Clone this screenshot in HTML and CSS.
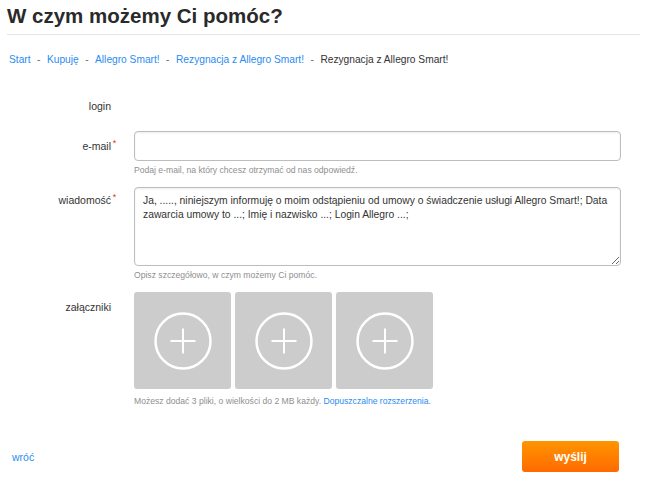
FILE: index.html
```html
<!DOCTYPE html>
<html lang="pl">
<head>
<meta charset="utf-8">
<title>W czym możemy Ci pomóc?</title>
<link rel="stylesheet" href="styles.css">
</head>
<body>
<div class="page">
  <h1 class="title">W czym możemy Ci pomóc?</h1>
  <nav class="crumbs"><a href="#">Start</a><span class="sep">-</span><a href="#">Kupuję</a><span class="sep">-</span><a href="#">Allegro Smart!</a><span class="sep">-</span><a href="#">Rezygnacja z Allegro Smart!</a><span class="sep">-</span><span class="current">Rezygnacja z Allegro Smart!</span></nav>

  <form class="form">
    <div class="label label-login">login<span class="req"></span></div>
    <div class="field"></div>

    <div class="label label-email">e-mail<span class="req">*</span></div>
    <div class="field">
      <input class="input" type="text">
      <div class="help">Podaj e-mail, na który chcesz otrzymać od nas odpowiedź.</div>
    </div>

    <div class="label label-msg">wiadomość<span class="req">*</span></div>
    <div class="field">
      <textarea class="textarea">Ja, ....., niniejszym informuję o moim odstąpieniu od umowy o świadczenie usługi Allegro Smart!; Data zawarcia umowy to ...; Imię i nazwisko ...; Login Allegro ...;</textarea>
      <div class="help">Opisz szczegółowo, w czym możemy Ci pomóc.</div>
    </div>

    <div class="label label-att">załączniki<span class="req"></span></div>
    <div class="field">
      <div class="uploads">
        <div class="upload"><svg width="58" height="58" viewBox="0 0 58 58"><circle cx="29" cy="29" r="27.5" fill="none" stroke="#fff" stroke-width="2.5"/><path d="M16.5 29h25M29 16.5v25" stroke="#fff" stroke-width="2"/></svg></div>
        <div class="upload"><svg width="58" height="58" viewBox="0 0 58 58"><circle cx="29" cy="29" r="27.5" fill="none" stroke="#fff" stroke-width="2.5"/><path d="M16.5 29h25M29 16.5v25" stroke="#fff" stroke-width="2"/></svg></div>
        <div class="upload"><svg width="58" height="58" viewBox="0 0 58 58"><circle cx="29" cy="29" r="27.5" fill="none" stroke="#fff" stroke-width="2.5"/><path d="M16.5 29h25M29 16.5v25" stroke="#fff" stroke-width="2"/></svg></div>
      </div>
      <div class="help help-att">Możesz dodać 3 pliki, o wielkości do 2 MB każdy. <a href="#">Dopuszczalne rozszerzenia</a>.</div>
    </div>
  </form>

  <div class="footer">
    <a class="back" href="#">wróć</a>
    <button class="submit" type="button">wyślij</button>
  </div>
</div>
</body>
</html>
```

FILE: styles.css
```css
* { box-sizing: border-box; }
html, body { margin: 0; padding: 0; background: #fff; }
body {
  font-family: "Liberation Sans", Arial, sans-serif;
  color: #333;
  font-size: 10.5px;
}
a { color: #2a8cf0; text-decoration: none; }

.page { width: 645px; }

.title {
  margin: 0 5px 0 7px;
  padding: 6px 0 8px;
  font-size: 20.5px;
  line-height: 20px;
  font-weight: bold;
  color: #2a2a2a;
  border-bottom: 1px solid #e6e6e6;
}

.crumbs {
  padding: 18px 0 0 9px;
  height: 63px;
  font-size: 10.2px;
  line-height: 14px;
  color: #333;
  white-space: nowrap;
}
.crumbs .sep { margin: 0 6.5px; color: #666; }
.crumbs .current { color: #333; }

.form {
  display: grid;
  grid-template-columns: 118px 487px;
  column-gap: 16px;
  align-items: start;
}
.label {
  text-align: right;
  font-size: 10.5px;
  line-height: 14px;
  color: #333;
  white-space: nowrap;
}
.req {
  display: inline-block;
  width: 7px;
  color: #e4362a;
  font-size: 9px;
  vertical-align: top;
  position: relative;
  top: -3px;
  text-align: center;
}
.label-login { padding-top: 1px; height: 33px; }
.label-email { padding-top: 8px; }
.label-msg { padding-top: 6px; }
.label-att { padding-top: 8px; }

.field { min-width: 0; }

.input {
  display: block;
  width: 487px;
  height: 30px;
  margin: 0;
  border: 1px solid #bdbdbd;
  border-radius: 4px;
  box-shadow: inset 0 1px 2px rgba(0,0,0,0.08);
  font: 10px "Liberation Sans", Arial, sans-serif;
  padding: 0 8px;
}
.textarea {
  display: block;
  width: 487px;
  height: 79px;
  margin: 0;
  border: 1px solid #bdbdbd;
  border-radius: 4px;
  box-shadow: inset 0 1px 2px rgba(0,0,0,0.08);
  font: 10.3px/14px "Liberation Sans", Arial, sans-serif;
  color: #333;
  padding: 6px 3px 6px 8px;
  resize: vertical;
}
.help {
  font-size: 8.6px;
  line-height: 10px;
  color: #8f8f8f;
  padding-top: 4px;
  height: 26px;
  white-space: nowrap;
}
.help-att { padding-top: 7px; height: 40px; }

.uploads { display: flex; gap: 4px; }
.upload {
  width: 97px;
  height: 97px;
  background: #cccccc;
  border-radius: 3px;
  display: flex;
  align-items: center;
  justify-content: center;
}

.footer {
  display: flex;
  justify-content: space-between;
  align-items: center;
  padding: 12px 26px 0 12px;
}
.back { font-size: 10.5px; }
.submit {
  width: 97px;
  height: 31px;
  border: 0;
  border-radius: 3px;
  background: linear-gradient(#ff9500, #ff6a00);
  color: #fff;
  font: bold 12px "Liberation Sans", Arial, sans-serif;
  padding: 0;
}
```
